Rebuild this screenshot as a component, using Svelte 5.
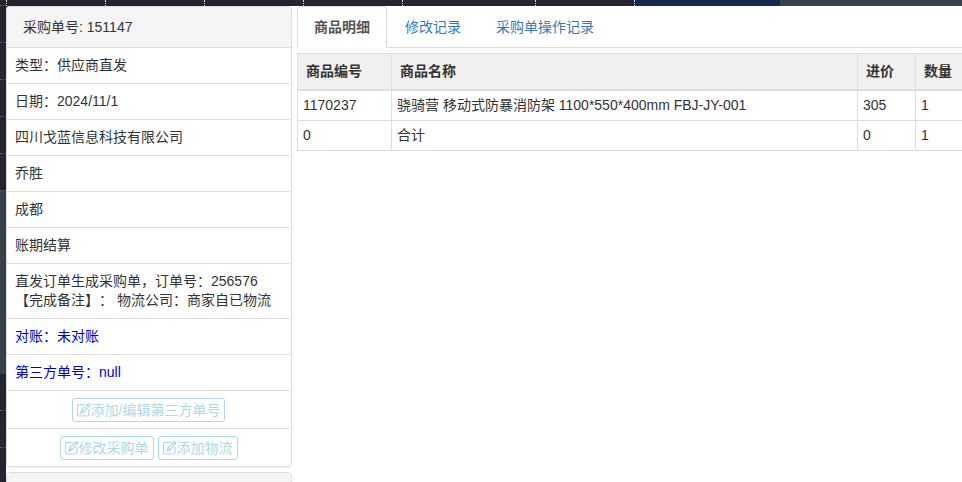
<script lang="ts">
	interface Row {
		text: string;
		marked?: boolean;
	}

	const rows: Row[] = [
		{ text: '类型：供应商直发' },
		{ text: '日期：2024/11/1' },
		{ text: '四川戈蓝信息科技有限公司' },
		{ text: '乔胜' },
		{ text: '成都' },
		{ text: '账期结算' },
		{ text: '直发订单生成采购单，订单号：256576\n【完成备注】： 物流公司：商家自已物流' },
		{ text: '对账：未对账', marked: true },
		{ text: '第三方单号：null', marked: true }
	];

	const actions = [['添加/编辑第三方单号'], ['修改采购单', '添加物流']];

	const tabs = ['商品明细', '修改记录', '采购单操作记录'];
	let active = $state(0);

	const goods = [
		{ id: '1170237', name: '骁骑营 移动式防暴消防架 1100*550*400mm FBJ-JY-001', price: 305, count: 1 },
		{ id: '0', name: '合计', price: 0, count: 1 }
	];
</script>

{#snippet editIcon()}
	<svg class="icon" viewBox="0 0 14 14" aria-hidden="true">
		<path d="M8 1.500H2Q.5 1.500.5 3v8.500Q.5 13 2 13h8.500q1.500 0 1.500-1.500V6" />
		<path d="M3.800 10.200l.9-3.200L11 .8q.7-.6 1.500.1t.1 1.600L6.800 9zM4.700 7l2.100 2M10 1.800l1.800 1.700" />
	</svg>
{/snippet}

<div class="page">
	<div class="corner"></div>
	<div class="strip-top">
		<span></span><span></span><span></span><span></span><span></span><span></span>
		<span class="navy"></span>
		<span class="slate"></span>
	</div>
	<div class="strip-left">
		<span></span><span></span><span></span><span></span><span></span>
		<span class="slate"></span>
		<span></span><span></span><span></span>
	</div>

	<div class="dialog">
		<aside>
			<section class="panel">
				<header>采购单号: 151147</header>
				<ul>
					{#each rows as row}
						<li class:marked={row.marked}>{row.text}</li>
					{/each}
					{#each actions as group}
						<li class="actions">
							{#each group as label}
								<button type="button">{@render editIcon()}{label}</button>
							{/each}
						</li>
					{/each}
				</ul>
			</section>
			<section class="panel">
				<header></header>
			</section>
		</aside>

		<main>
			<nav>
				{#each tabs as tab, i}
					<a
						href="#tab{i}"
						class:active={active === i}
						onclick={(e) => {
							e.preventDefault();
							active = i;
						}}>{tab}</a
					>
				{/each}
			</nav>

			<table>
				<thead>
					<tr>
						<th class="id">商品编号</th>
						<th>商品名称</th>
						<th class="price">进价</th>
						<th class="count">数量</th>
					</tr>
				</thead>
				<tbody>
					{#each goods as item}
						<tr>
							<td>{item.id}</td>
							<td>{item.name}</td>
							<td>{item.price}</td>
							<td>{item.count}</td>
						</tr>
					{/each}
				</tbody>
			</table>
		</main>
	</div>
</div>

<style>
	:global(body) {
		margin: 0;
	}

	.page,
	.page * {
		box-sizing: border-box;
	}

	.page {
		display: grid;
		grid-template-columns: 6px minmax(0, 1fr);
		grid-template-rows: 6px minmax(0, 1fr);
		height: 100vh;
		overflow: hidden;
		background: #23262e;
		color: #333;
		font: 14px/19px 'Liberation Sans', 'Noto Sans CJK SC', sans-serif;
		text-spacing-trim: space-all;
	}

	/* slivers of the sheet behind the dialog */
	.corner {
		border-bottom: 1px dotted #5a5e66;
	}

	.strip-top {
		display: grid;
		grid-template-columns: 99px 99px 99px 99px 133px 99px 146px 1fr;

		span {
			border-left: 1px dotted #d8d8d8;
		}

		.navy {
			background: #14284c;
		}

		.slate {
			border: 0;
			background: #36434f;
		}
	}

	.strip-left {
		display: flex;
		flex-direction: column;

		span {
			flex: none;
			height: 37px;
			border-bottom: 1px dotted #5a5e66;
		}

		.slate {
			height: 183px;
			border: 0;
			background: #36434f;
		}
	}

	.dialog {
		display: flex;
		gap: 5px;
		background: #fff;
		border-top-left-radius: 4px;
	}

	aside {
		flex: none;
		width: 286px;
	}

	.panel {
		margin-bottom: 5px;
		border: 1px solid #ddd;
		border-radius: 4px;
		box-shadow: 0 1px 1px rgba(0, 0, 0, 0.05);

		header {
			min-height: 41px;
			padding: 11px 16px 10px;
			border-bottom: 1px solid #ddd;
			border-radius: 3px 3px 0 0;
			background: #f5f5f5;
		}

		ul {
			margin: 0 1px 0 0;
			padding: 0;
			list-style: none;
		}

		li {
			padding: 8px;
			border-bottom: 1px solid #ddd;
			white-space: pre-line;
		}

		li:last-child {
			border-bottom: 0;
		}

		.marked {
			color: #0000cd;
		}

		.actions {
			display: flex;
			justify-content: center;
			gap: 4px;
			padding: 7px 8px 6px;
		}
	}

	button {
		display: flex;
		align-items: center;
		height: 24px;
		padding: 0 4px;
		border: 1px solid #add8e6;
		border-radius: 3px;
		background: #fff;
		color: #add8e6;
		font: inherit;
		cursor: pointer;
	}

	.icon {
		width: 14px;
		height: 14px;
		fill: none;
		stroke: currentColor;
		stroke-width: 1.2;
	}

	main {
		flex: 1;
		min-width: 0;
	}

	nav {
		display: flex;
		gap: 1px;
		margin-bottom: 5px;
		border-bottom: 1px solid #ddd;

		a {
			margin-bottom: -1px;
			padding: 11px 16px 10px;
			border: 1px solid transparent;
			border-radius: 4px 4px 0 0;
			color: #337ab7;
			text-decoration: none;
		}

		.active {
			border-color: #ddd;
			border-bottom-color: #fff;
			background: #fff;
			color: #555;
			font-weight: bold;
		}
	}

	table {
		width: 100%;
		border-top: 1px solid #ddd;
		border-spacing: 0;
		table-layout: fixed;
	}

	th,
	td {
		border-left: 1px solid #ddd;
		text-align: left;
		white-space: nowrap;
	}

	th {
		padding: 8px;
		border-bottom: 2px solid #ddd;
		background: #f0f0f0;
	}

	td {
		padding: 5px;
		border-bottom: 1px solid #ddd;
	}

	.id {
		width: 94px;
	}

	.price {
		width: 58px;
	}

	.count {
		width: 47px;
	}
</style>
